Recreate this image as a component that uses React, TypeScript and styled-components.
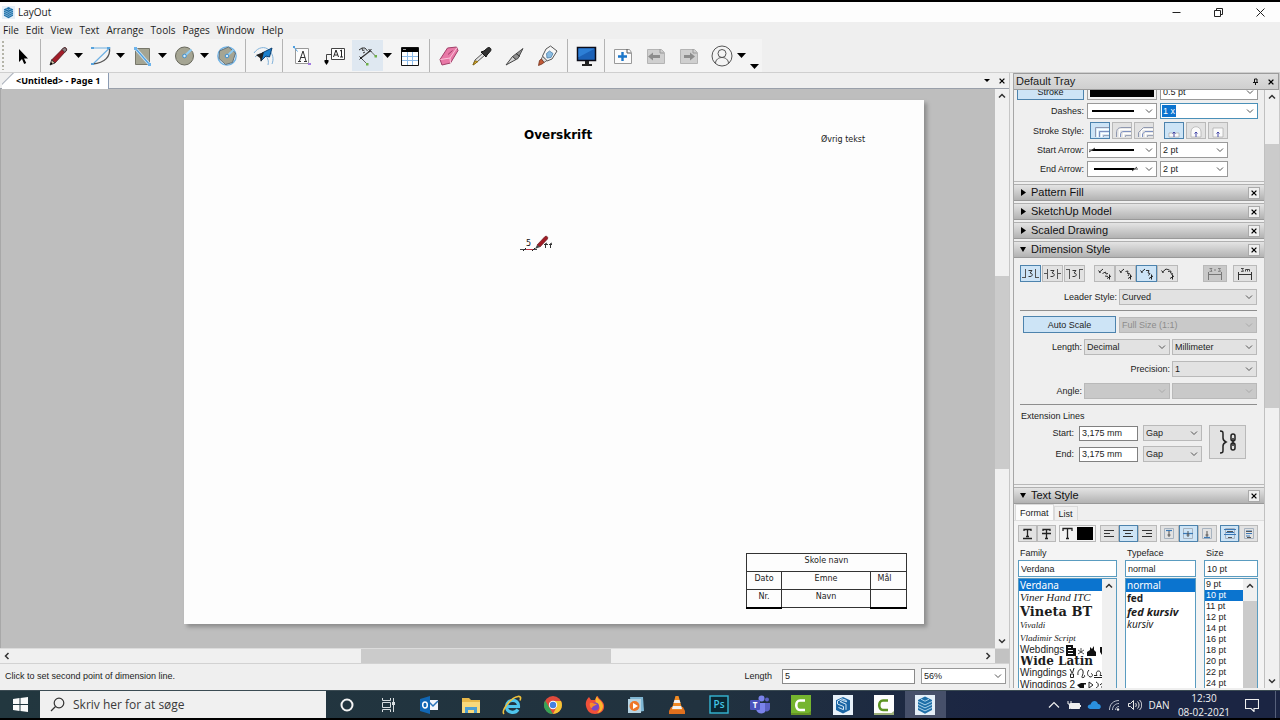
import React from 'react';
import styled, { createGlobalStyle, css } from 'styled-components';

const ARIAL = '"Liberation Sans", Arial, sans-serif';
const UI = '"Open Sans", "Noto Sans", sans-serif';
const SANS = '"Noto Sans", Verdana, sans-serif';
const DOC = '"DejaVu Sans", Verdana, sans-serif';

const Global = createGlobalStyle`
  *, *::before, *::after { box-sizing: border-box; }
  body { margin: 0; background: #000; font-family: ${ARIAL}; color: #1c1c1c; }
  button, input, select { font: inherit; color: inherit; margin: 0; padding: 0; border-radius: 0; }
  svg { display: block; flex: none; }
`;

const App_ = styled.div`
  display: flex;
  flex-direction: column;
  height: 100vh;
  overflow: hidden;
  background: #efefef;
  border-top: 2px solid #000;
  border-bottom: 2px solid #000;
  font-size: 9px;
`;

/* ---------- window chrome ---------- */
const TitleBar = styled.header`
  display: flex;
  align-items: center;
  flex: none;
  height: 20px;
  padding-left: 2px;
  gap: 3px;
  background: #fdfdfd;
  font: 10px/20px ${UI};
`;
const AppTitle = styled.h1`
  flex: 1;
  margin: 0;
  font: inherit;
`;
const WinButton = styled.button`
  display: grid;
  place-items: center;
  width: 39px;
  height: 20px;
  border: 0;
  background: none;
`;
const MenuBar = styled.nav`
  display: flex;
  flex: none;
  height: 17px;
  padding-left: 3px;
  gap: 7px;
  font: 10px/17px ${UI};
`;
const MenuButton = styled.button`
  border: 0;
  background: none;
`;

/* ---------- toolbar ---------- */
const ToolBar = styled.div`
  flex: none;
  height: 34px;
  border-bottom: 1px solid #cfcfcf;
`;
const ToolStrip = styled.div`
  display: flex;
  align-items: stretch;
  width: 762px;
  height: 33px;
  background: #f4f4f4;
`;
const Grip = styled.span`
  width: 8px;
  margin: 2px 0;
  background: repeating-linear-gradient(#b4b4a8 0 2px, transparent 2px 4px) 2px 0 / 2px 100% no-repeat;
`;
const ToolGroup = styled.div<{ $pad?: number; $last?: boolean }>`
  display: flex;
  align-items: center;
  gap: 2px;
  padding: 0 ${p => (p.$pad ?? 0) + 3}px 0 ${p => (p.$pad ?? 0) + 2}px;
  border-right: ${p => (p.$last ? 0 : 1)}px solid #b4b4b4;
  &:nth-child(2) { padding-left: 1px; }
`;
const Split = styled.div`
  display: flex;
  align-items: center;
`;
const ToolButton = styled.button<{ $on?: boolean }>`
  display: grid;
  place-items: center;
  width: 31px;
  height: 31px;
  border: 0;
  background: ${p => (p.$on ? '#dfe8f1' : 'none')};
`;
const DropButton = styled.button<{ $low?: boolean }>`
  display: grid;
  place-items: center;
  width: 9px;
  height: 31px;
  border: 0;
  background: none;
  align-self: ${p => (p.$low ? 'flex-end' : 'center')};
  ${p => p.$low && css`height: 12px; margin-left: 2px;`}
`;

/* ---------- main split ---------- */
const Main = styled.div`
  flex: 1;
  min-height: 0;
  display: grid;
  grid-template-columns: minmax(0, 1fr) 267px;
  column-gap: 3px;
  padding-bottom: 2px;
`;
const Editor = styled.main`
  display: flex;
  flex-direction: column;
  min-height: 0;
  border-right: 1px solid #c6c6c6;
`;
const TabBar = styled.div`
  display: flex;
  flex: none;
  justify-content: space-between;
  height: 16px;
  padding-left: 2px;
  border-bottom: 1px solid #9aa0aa;
`;
const DocTab = styled.button`
  height: 16px;
  padding: 0 8px 0 14px;
  border: 0;
  border-right: 1px solid #8b9bb3;
  background: linear-gradient(135deg, #efefef 7px, #a4acb8 8px, #fff 9px);
  font: bold 9px/16px "Noto Sans", "DejaVu Sans", sans-serif;
  color: #000;
`;
const TabTools = styled.div`
  display: flex;
  align-items: center;
`;
const TinyButton = styled.button`
  display: grid;
  place-items: center;
  width: 15px;
  height: 15px;
  border: 0;
  background: none;
`;
const CanvasArea = styled.div`
  flex: 1;
  min-height: 0;
  display: grid;
  grid-template-columns: minmax(0, 1fr) 14px;
`;
const Canvas = styled.div`
  position: relative;
  overflow: hidden;
  background: #bebebe;
  border-left: 1px solid #a8a8a8;
`;
const Paper = styled.section`
  position: absolute;
  left: 183px;
  top: 11px;
  width: 740px;
  height: 524px;
  background: #fdfdfd;
  box-shadow: 3px 3px 4px #8d8d8d;
  color: #222;
  font: 8px/10px ${DOC};
`;
const Heading = styled.h2`
  position: absolute;
  left: 340px;
  top: 27px;
  margin: 0;
  font: bold 12px/16px ${DOC};
  color: #000;
`;
const Note = styled.p`
  position: absolute;
  left: 637px;
  top: 35px;
  margin: 0;
`;
const Drawing = styled.svg`
  position: absolute;
  left: 334px;
  top: 132px;
`;
const TitleBlock = styled.table`
  position: absolute;
  left: 562px;
  top: 453px;
  width: 160px;
  border-collapse: collapse;
  table-layout: fixed;
  td {
    height: 18px;
    padding: 0 0 3px;
    border: 1px solid #333;
    text-align: center;
  }
  tr:last-child td:not(:nth-child(2)) { border-bottom: 2px solid #000; }
  tr:nth-child(2) td:last-child { padding-right: 8px; }
`;

/* ---------- scroll bars ---------- */
const ScrollBar = styled.div<{ $h?: boolean }>`
  display: flex;
  flex-direction: ${p => (p.$h ? 'row' : 'column')};
  flex: 1;
  min-width: 0;
  background: #f0f0f0;
`;
const ScrollArrow = styled.button`
  display: grid;
  place-items: center;
  width: 14px;
  height: 14px;
  flex: none;
  border: 0;
  background: none;
`;
const Track = styled.span<{ $w: number }>`
  flex: ${p => p.$w} 1 0;
`;
const Thumb = styled(Track)`
  background: #cbcbcb;
`;
const BottomScroll = styled.div`
  display: flex;
  flex: none;
  height: 16px;
  border-top: 1px solid #dcdcdc;
  border-bottom: 1px solid #d2d2d2;
`;
const Corner = styled.span`
  width: 14px;
  background: #c2c2c2;
`;
const StatusBar = styled.footer`
  display: flex;
  align-items: center;
  flex: none;
  height: 24px;
  padding: 0 3px 0 5px;
`;
const StatusText = styled.span`
  flex: 1;
`;
const StatusField = styled.input`
  width: 133px;
  height: 15px;
  margin: 0 6px 0 10px;
  padding: 0 2px;
  border: 1px solid #8a8a8a;
  background: #fff;
`;

/* ---------- tray ---------- */
const Tray = styled.aside`
  display: flex;
  flex-direction: column;
  min-height: 0;
  border-left: 1px solid #a6a6a6;
  border-right: 1px solid #c8c8c8;
`;
const TrayTitle = styled.div`
  display: flex;
  align-items: center;
  flex: none;
  height: 17px;
  padding-left: 2px;
  border: 1px solid #9c9c9c;
  border-left: 0;
  background: linear-gradient(#dedede, #cfcfcf);
  h2 { flex: 1; margin: 0; font: 11px/15px ${ARIAL}; }
`;
const TrayBody = styled.div`
  flex: 1;
  min-height: 0;
  display: grid;
  grid-template-columns: minmax(0, 1fr) 14px;
`;
const TrayScroll = styled.div`
  overflow: hidden;
  border-right: 1px solid #c0c0c0;
`;
const Scrolled = styled.div`
  display: flex;
  flex-direction: column;
  gap: 2px;
  margin-top: -10px;
`;
const SectionHead = styled.div`
  display: flex;
  align-items: center;
  height: 17px;
  padding: 0 4px 0 6px;
  gap: 5px;
  border-top: 1px solid #b0b0b0;
  border-bottom: 1px solid #999;
  background: linear-gradient(#e4e4e4, #b2b2b2);
  h3 { flex: 1; margin: 0; font: 11px/15px ${ARIAL}; color: #111; }
`;
const CloseBox = styled.button`
  display: grid;
  place-items: center;
  width: 12px;
  height: 12px;
  border: 1px solid #aaa;
  background: #efefef;
`;
const StrokePanel = styled.div`
  display: grid;
  grid-template-columns: 67px 70px 98px;
  gap: 3px;
  align-items: center;
  padding: 3px 0 4px 3px;
  border-bottom: 1px solid #b8b8b8;
`;
const RowLabel = styled.label`
  text-align: right;
  white-space: nowrap;
`;
const Toggle = styled.button<{ $on?: boolean; $w?: number }>`
  display: grid;
  place-items: center;
  width: ${p => (p.$w ? p.$w + 'px' : '100%')};
  height: 17px;
  border: 1px solid ${p => (p.$on ? '#4d83ad' : '#b9b9b9')};
  background: ${p => (p.$on ? '#cde4f6' : '#e2e2e2')};
  &:disabled { background: #c9c9c9; }
`;
const Swatch = styled.button`
  height: 17px;
  border: 1px solid #a0a0a0;
  background: #000;
  box-shadow: inset 0 0 0 2px #f2f2f2;
`;
const SelectBox = styled.span<{ $w?: number; $white?: boolean; $blue?: boolean; $off?: boolean }>`
  display: grid;
  align-items: center;
  width: ${p => (p.$w ? p.$w + 'px' : 'auto')};
  height: 16px;
  flex: none;
  border: 1px solid ${p => (p.$blue ? '#4a90b8' : p.$white ? '#999' : '#b9b9b9')};
  background: ${p => (p.$off ? '#c9c9c9' : p.$white ? '#fff' : '#e2e2e2')};
  > * { grid-area: 1 / 1; }
  > svg { pointer-events: none; }
  > svg:last-child { justify-self: end; margin-right: 3px; }
  select {
    width: 100%;
    height: 14px;
    padding-left: 2px;
    border: 0;
    appearance: none;
    background: none;
    color: #1c1c1c;
    opacity: 1;
  }
  select:disabled { color: #8c8c8c; }
`;
const Picked = styled.span`
  justify-self: start;
  margin-left: 1px;
  padding: 0 1px;
  line-height: 12px;
  background: #0b74cf;
  color: #fff;
  pointer-events: none;
`;
const ButtonRun = styled.div<{ $gap?: number; $pad?: number }>`
  display: flex;
  gap: ${p => p.$gap ?? 2}px;
  padding-left: ${p => p.$pad ?? 0}px;
`;
const DimPanel = styled.div`
  display: flex;
  flex-direction: column;
  gap: 6px;
  height: 227px;
  margin-top: -2px;
  padding: 7px 7px 0 6px;
  border-bottom: 1px solid #b8b8b8;
`;
const Row = styled.div<{ $gap?: number }>`
  display: flex;
  justify-content: flex-end;
  align-items: center;
  gap: ${p => p.$gap ?? 2}px;
`;
const DimButtons = styled(Row)`
  justify-content: space-between;
  padding-bottom: 1px;
`;
const Rule = styled.hr`
  width: 100%;
  height: 1px;
  margin: -1px 0;
  border: 0;
  background: #8e8e8e;
`;
const Ext = styled.fieldset`
  min-width: 0;
  margin: 0;
  padding: 0 0 0 1px;
  border: 0;
  legend { padding: 0; line-height: 12px; }
`;
const ExtBody = styled.div`
  display: flex;
  align-items: flex-start;
  gap: 7px;
  padding-top: 3px;
`;
const ExtGrid = styled.div`
  display: grid;
  grid-template-columns: 53px 59px 59px;
  gap: 5px;
  align-items: center;
`;
const TextField = styled.input<{ $blue?: boolean }>`
  width: 100%;
  height: ${p => (p.$blue ? 17 : 15)}px;
  padding: 0 2px;
  border: 1px solid ${p => (p.$blue ? '#5a9cc0' : '#808080')};
  background: #fff;
`;
const LinkButton = styled.button`
  display: grid;
  place-items: center;
  width: 37px;
  height: 34px;
  border: 1px solid #b9b9b9;
  background: #e2e2e2;
`;
const TextTabs = styled.div`
  display: flex;
  align-items: flex-end;
  height: 16px;
  margin-top: -2px;
  padding-left: 1px;
`;
const TextTab = styled.button<{ $on?: boolean }>`
  height: ${p => (p.$on ? 16 : 14)}px;
  padding: 0 4px;
  border: 1px solid #dadada;
  border-bottom: 0;
  background: ${p => (p.$on ? '#fbfbfb' : '#f0f0f0')};
`;
const TextPanel = styled.div`
  margin-top: -2px;
  padding: 4px 6px 0 4px;
  border-top: 1px solid #dedede;
  background: #f4f4f4;
`;
const FormatBar = styled.div`
  display: flex;
  justify-content: space-between;
`;
const ColorToggle = styled(Toggle)`
  display: flex;
  align-items: center;
  justify-content: center;
  gap: 4px;
  background: #f4f4f4;
`;
const Ink = styled.span`
  width: 16px;
  height: 13px;
  background: #000;
`;
const FontGrid = styled.div`
  display: grid;
  grid-template-columns: 99px 71px 54px;
  column-gap: 8px;
  padding-top: 4px;
`;
const FontColumn = styled.div`
  display: flex;
  flex-direction: column;
  label { line-height: 14px; padding-left: 2px; }
`;
const ListFrame = styled.div<{ $bar?: boolean }>`
  display: grid;
  grid-template-columns: minmax(0, 1fr) ${p => (p.$bar ? '14px' : '')};
  height: 120px;
  margin-top: 1px;
  border: 1px solid #5a9cc0;
  background: #fff;
`;
const List = styled.ul`
  margin: 0;
  padding: 0;
  overflow: hidden;
  list-style: none;
`;
const Item = styled.li<{ $on?: boolean; $h: number; $font?: string }>`
  display: flex;
  align-items: center;
  gap: 1px;
  height: ${p => p.$h}px;
  padding-left: 1px;
  overflow: hidden;
  white-space: nowrap;
  font: ${p => p.$font ?? `9px ${ARIAL}`};
  line-height: ${p => p.$h}px;
  background: ${p => (p.$on ? '#0b74cf' : 'none')};
  color: ${p => (p.$on ? '#fff' : '#1c1c1c')};
`;

/* ---------- task bar ---------- */
const TaskBar = styled.div`
  display: flex;
  flex: none;
  height: 28px;
  border-top: 1px solid #3b4b53;
  background: linear-gradient(90deg, #22373f, #21323f 55%, #1b2543 78%);
  color: #f2f2f2;
  font-family: ${UI};
`;
const TaskButton = styled.button<{ $on?: boolean }>`
  display: grid;
  place-items: center;
  flex: 1;
  min-width: 0;
  border: 0;
  background: ${p => (p.$on ? '#46506a' : 'none')};
`;
const StartButton = styled(TaskButton)`
  flex: none;
  width: 40px;
`;
const Search = styled.label`
  display: flex;
  align-items: center;
  width: 286px;
  padding-left: 10px;
  gap: 8px;
  background: #f0f0f0;
  color: #3a3a3a;
  input {
    flex: 1;
    min-width: 0;
    border: 0;
    background: none;
    font: 12px ${UI};
    outline: 0;
  }
  input::placeholder { color: #3a3a3a; opacity: 1; }
`;
const Pinned = styled.div`
  display: flex;
  width: 620px;
`;
const Notify = styled.div`
  display: flex;
  align-items: center;
  margin-left: auto;
  padding-right: 2px;
  font-size: 10px;
`;
const NotifyButton = styled.button<{ $w?: number }>`
  display: grid;
  place-items: center;
  width: ${p => p.$w ?? 20}px;
  height: 27px;
  border: 0;
  background: none;
`;
const Clock = styled.time`
  width: 60px;
  text-align: center;
  line-height: 14px;
`;
const ShowDesktop = styled.button`
  width: 3px;
  height: 27px;
  margin-left: 5px;
  border: 0;
  border-left: 1px solid #56607a;
  background: none;
`;

/* ---------- drawings ---------- */
const Svg = ({ s = 22, h, children }: { s?: number; h?: number; children: React.ReactNode }) => (
  <svg width={s} height={h ?? s} viewBox={`0 0 ${s} ${h ?? s}`} fill="none" aria-hidden="true">{children}</svg>
);
const Down = ({ small }: { small?: boolean }) => (
  <svg width={small ? 6 : 9} height={small ? 3 : 5} viewBox="0 0 8 4" preserveAspectRatio="none" aria-hidden="true"><path d="M0 0h8L4 4z" fill="#000" /></svg>
);
const Chevron = ({ dir = 'down', c = '#444' }: { dir?: string; c?: string }) => {
  const d: Record<string, string> = { down: 'M1 2.5L4 5.5 7 2.5', up: 'M1 5.5L4 2.5 7 5.5', left: 'M5.5 1L2.5 4 5.5 7', right: 'M2.5 1L5.5 4 2.5 7' };
  return <Svg s={8}><path d={d[dir]} stroke={c} strokeWidth={dir === 'down' && c !== '#333' ? 1 : 1.5} /></Svg>;
};
const Cross = ({ s = 6 }: { s?: number }) => (
  <svg width={s} height={s} viewBox="0 0 6 6" aria-hidden="true"><path d="M.6.6l4.8 4.8M5.4.6L.6 5.4" stroke="#000" strokeWidth="1.3" /></svg>
);
const LayerLogo = ({ s = 12 }: { s?: number }) => (
  <svg width={s} height={s} viewBox="0 0 20 20" fill="none" aria-hidden="true">
    <rect width="20" height="20" fill="#e4eff8" />
    <path d="M10 1.5l7 3.5v10l-7 3.8L3 15V5z" fill="#1f6fa8" />
    <path d="M3 6.5l7 3.4 7-3.4M3 9.5l7 3.4 7-3.4M3 12.5l7 3.4 7-3.4M6 4.2l4 2 4-2" stroke="#b9dcf2" strokeWidth=".9" />
  </svg>
);
const SketchLogo = () => (
  <Svg s={20}>
    <rect width="20" height="20" fill="#e8f1f9" />
    <path d="M10 2l7 3.2V15l-7 3.5L3 15V5.2z" fill="#1b66a5" />
    <path d="M13.5 5.5L9 3.8 4.5 6v3l6 2.5v3.2l-5-2.2M14 6.8L9.5 5.5 7 6.6l6 2.6v5.6" stroke="#d6eaf8" strokeWidth="1" />
  </Svg>
);

const toolIcons: Record<string, React.ReactNode> = {
  Select: <path d="M8 4v13l3-3 2.200 5 2-1-2.200-4.600h4z" fill="#000" />,
  Line: <><path d="M3.600 15L15.500 3c1.800-1.300 4 .800 2.800 2.600L7 18z" fill="#a31d29" stroke="#4a1015" strokeWidth=".800" /><path d="M14 4.600l2.800 2.800 1.500-1.600c1-2-1.300-3.900-2.800-2.800z" fill="#8c7f82" stroke="#3d2a2c" strokeWidth=".800" /><path d="M2 20l1.600-5L7 18z" fill="#d8c6a8" stroke="#222" strokeWidth=".800" /><path d="M2 20l1-3 1.600 1.700z" fill="#000" /></>,
  Arc: <><path d="M2.500 3h17L3 19" stroke="#6fb0e2" strokeWidth="1.200" /><path d="M19.500 3c1 8-4 15-17 16" stroke="#555" strokeWidth="1.300" /><path d="M1 2h3v2H1zM17 2h3v2h-3zM1 18h3v2H1z" fill="#58a3dc" /></>,
  Rectangle: <><path d="M3.500 3.500h14v16h-14z" fill="#a5a593" stroke="#77776a" /><path d="M3 3l15 17" stroke="#cfe6f8" strokeWidth="3" /><path d="M3 3l15 17" stroke="#4d9fe0" strokeWidth="1.200" /><path d="M2 2h3v3H2zM16 18h3v3h-3z" fill="#6db4ec" /></>,
  Circle: <><circle cx="10.500" cy="11" r="9" fill="#a5a593" stroke="#66665a" /><path d="M10.500 11L17.500 4.500" stroke="#8fcbf2" strokeWidth="2.200" /><circle cx="10.500" cy="11" r="1.800" fill="#d5ebfa" stroke="#3f8fcd" /></>,
  Polygon: <><circle cx="11" cy="11" r="9.200" stroke="#6db2e6" strokeWidth="1.300" /><path d="M3.500 6l9-4 7 6-3 9.500-7 2-6.500-6z" fill="#a5a593" stroke="#5c6f7c" /><path d="M11 11l6.500-6" stroke="#8fcbf2" strokeWidth="2" /><circle cx="11" cy="11" r="1.800" fill="#d5ebfa" stroke="#3f8fcd" /></>,
  Offset: <><path d="M1 8c4-6 11-7 15-3s5 9 3 14M2 12c4-4 9-4 11-1s3 5 2 9" stroke="#7fb1da" /><path d="M9 8l10-5-2.500 9-3.500-1-5 5 1-4z" fill="#1c80cc" stroke="#0d3f70" /><path d="M3 10l8-3-2 7-1 3-1-4z" fill="#222" /></>,
  Text: <><path d="M4.500 3.500h13v15h-13z" fill="#fdfdfd" stroke="#999" /><path d="M7 16.500h3M13 16.500h3M8.500 16L12 6l3 10M9.600 12.500h4.500" stroke="#333" /><path d="M2.500 1.500l4 5" stroke="#4d9fe0" /><path d="M2 1h2v2H2z" fill="#4d9fe0" /><path d="M17 18h3v2h-3z" fill="#a37be0" /></>,
  Label: <><path d="M7.500 3.500h13v11h-13z" fill="#fff" stroke="#444" /><path d="M9.500 12l2.500-7 2.500 7M10.500 10h3M16 6l1.500-1v7M16 12h3" stroke="#222" /><path d="M7 9.500H2.500V18" stroke="#444" /><path d="M.500 15h4v2l-2 3-2-3z" fill="#000" /></>,
  Dimension: <><path d="M4 13l9-7" stroke="#333" strokeWidth="1.200" /><path d="M4 13l6 6M13 5.500l5.500 5.500" stroke="#666" /><path d="M2.500 11.500l3 3M2.500 14.500l3-3M11.500 4l3 3M11.500 7l3-3" stroke="#222" /><path d="M2 5l3-2 .500 2.500 2-.500M6 8l2-1M8 3l2.500 3M5 3l3 0" stroke="#333" /><path d="M9 18h2.500v2.500H9zM17.500 10H20v2.500h-2.500z" fill="#6fb04a" /></>,
  Table: <><path d="M2.500 2.500h17v18h-17z" fill="#fff" stroke="#111" /><path d="M3 3h16v4H3z" fill="#000" /><path d="M3 11.500h16M3 15.500h16M8.500 7v13M13.500 7v13" stroke="#8dbbe8" /><path d="M4 4.500h3" stroke="#999" /></>,
  Eraser: <><path d="M2 14.500L9.500 3l9-1 1.500 3.500L12.500 18 4 20z" fill="#e878a6" stroke="#a03f68" /><path d="M2.500 14.500l9.500-1.500 7-10.500M12 13l.500 5" stroke="#fbc4da" /><path d="M10 9.500l4.500-4" stroke="#a03f68" /></>,
  Sample: <><path d="M2 20l2-5 8-7 2 2-8 7z" fill="#e2e2e2" stroke="#555" /><path d="M2 20l2-4 3 .500z" fill="#edc33b" stroke="#8d6b10" /><path d="M10 7l5 5 1-2 3.500-4c1.500-2-1-4.500-3-3L13 6z" fill="#333" stroke="#111" /></>,
  Split: <><path d="M2 20l6.500-8.500L12 14.500z" fill="#d5d5d5" stroke="#444" /><path d="M8.500 11.500L19 3.500l-5 10-2 1z" fill="#8f8f8f" stroke="#333" strokeWidth=".800" /><path d="M12 8.500l4 3" stroke="#333" /></>,
  Join: <><path d="M9 4l4.500-3L20 6l-5 8-5 2-4.500-5z" fill="#f6f6f6" stroke="#555" /><path d="M9.500 8.500L12.500 6l3.500 2.500-2 4-4 .500z" fill="#8bbce2" stroke="#4d81aa" strokeWidth=".800" /><path d="M5.500 11.500l4.500 4-3 2-3-3z" fill="#ddd" stroke="#555" strokeWidth=".800" /><path d="M1.500 20.500l1-5 2-1.500 2.500 3.500-2 1.500z" fill="#c25a36" stroke="#71301a" strokeWidth=".800" /></>,
  Presentation: <><path d="M2.500 2.500h18v13h-18z" fill="#1c62b8" stroke="#0c0c18" strokeWidth="1.500" /><path d="M4 12L19 4v-.500H3.500V12z" fill="#2d7fd6" /><path d="M10 16h4v3h3v2H7v-2h3z" fill="#222" /></>,
  Add: <><path d="M2.500 4.500h15l2 3v11h-17z" fill="#fbfbfb" stroke="#999" /><path d="M15 4v4h4" stroke="#555" /><path d="M10.500 7v9M6 11.500h9" stroke="#1b76c9" strokeWidth="2.400" /></>,
  Previous: <><path d="M2.500 4.500h14l3 3v11h-17z" fill="#cfcfcf" stroke="#b4b4b4" /><path d="M15 4v4h4" stroke="#999" /><path d="M3 11.500l5-4v2.500h7v3H8v2.500z" fill="#8c8c8c" /></>,
  Next: <><path d="M2.500 4.500h14l3 3v11h-17z" fill="#cfcfcf" stroke="#b4b4b4" /><path d="M15 4v4h4" stroke="#999" /><path d="M17 11.500l-5-4v2.500H6v3h6v2.500z" fill="#8c8c8c" /></>,
  Account: <><circle cx="11" cy="11" r="10" stroke="#555" /><circle cx="11" cy="8.500" r="4" stroke="#555" /><path d="M4.500 18.500c0-8 13-8 13 0" stroke="#555" /></>,
};
const Tool = ({ name, on, drop }: { name: string; on?: boolean; drop?: boolean }) => (
  <Split>
    <ToolButton $on={on} aria-label={name}><Svg>{toolIcons[name]}</Svg></ToolButton>
    {drop && <DropButton aria-label={`${name} options`}><Down /></DropButton>}
  </Split>
);

const Choice = ({ value, label, id, w, white, blue, off, art, children }: {
  value?: string; label: string; id?: string; w?: number; white?: boolean; blue?: boolean; off?: boolean; art?: React.ReactNode; children?: React.ReactNode;
}) => (
  <SelectBox $w={w} $white={white} $blue={blue} $off={off}>
    <select id={id} aria-label={label} disabled={off}><option>{value ?? ''}</option></select>
    {art}
    {children}
    <Chevron c={off ? '#aaa' : '#555'} />
  </SelectBox>
);
const LineArt = ({ kind }: { kind: string }) => (
  <Svg s={56} h={12}>
    <path d={kind === 'end' ? 'M6 6h40' : 'M4 6h42'} stroke="#000" strokeWidth="2" />
    {kind === 'start' && <path d="M1 8l6-4M1 6h4" stroke="#444" />}
    {kind === 'end' && <path d="M44 8l5-4M46 6h4" stroke="#444" />}
  </Svg>
);
const Section = ({ title, open }: { title: string; open?: boolean }) => (
  <SectionHead>
    <Svg s={6} h={7}><path d={open ? 'M0 1h6L3 6z' : 'M1 0l5 3.500L1 7z'} fill="#000" /></Svg>
    <h3>{title}</h3>
    <CloseBox aria-label={`Close ${title}`}><Cross /></CloseBox>
  </SectionHead>
);
const Corners = ({ kind }: { kind: number }) => {
  const outer = ['M4.500 14V4.500H18', 'M3.500 14V10c0-4 2-5.500 5.500-5.500h9', 'M3.500 14V9.500l5-5H18'][kind];
  const mid = ['M8.500 14V8.500H18', 'M7.500 14v-2c0-2.500 1-3.500 3.500-3.500h7', 'M7.500 14v-3l2.500-2.500h8'][kind];
  return <Svg s={18} h={15}><path d="M6.500 14V6.500H18M10.500 14v-3.500H18" stroke="#fff" strokeWidth="1.500" /><path d={outer} stroke="#8f98b0" /><path d={mid} stroke="#7d90c0" /><path d="M12.500 14v-1.500H18" stroke="#9aa3b8" /></Svg>;
};
const Caps = ({ kind }: { kind: number }) => {
  const d = ['M4 14v-4h10v4z', 'M4 14V9c0-7 10-7 10 0v5z', 'M4 14V5h10v9z'];
  return <Svg s={18} h={15}><path d={d[kind]} fill="#fafafa" stroke="#aaa" strokeWidth=".700" /><path d="M9 14V9M7.500 10.500L9 9l1.500 1.500" stroke="#4548a8" /></Svg>;
};
const DimPos = ({ kind }: { kind: number }) => (
  <Svg s={19} h={15}>
    <path d="M7.500 4.500h3.500L9 7c3 0 3 3.500 0 3.500H7.500" stroke="#333" />
    <path d={['M4.500 3v9M14.500 3v9M1 11.500h3M15 11.500h3', 'M4.500 3v10M14.500 3v10M1 7.500h3M15 7.500h3', 'M4.500 3v10M14.500 3v10M1 3.500h3M15 3.500h3'][kind]} stroke="#555" />
  </Svg>
);
const DimAlign = ({ kind }: { kind: number }) => (
  <Svg s={18} h={15}>
    <path d="M3 6.500L7 3M2.500 4.500l2 2.500M11 12.500l4-2.500M13.500 8.500v5" stroke="#222" />
    <path d={['M6.500 7.500l3-1.500.500 2 2-.500M9 10l3 .500', 'M8.500 5.500l2.500-.500-.500 2.500 2 0-1.500 2.500', 'M8 4.500h3l-1 2.500 2 .500-1.500 2', 'M7 3l3.500 1M9 5.500l3-.500-.500 2 2 .500-1 1.500'][kind]} stroke="#333" />
  </Svg>
);
const DimUnit = ({ long }: { long?: boolean }) => (
  <Svg s={20} h={15}>
    <path d="M3.500 6v8M16.500 6v8M3 8.500h14" stroke={long ? '#333' : '#777'} />
    <path d={long ? 'M6 2.500h2.500l-1 1.200 1 1.600H6M10.500 5.500V3.500h4v2M12.500 3.500v2' : 'M4.500 2.500H7l-1 1.200 1 1.600H4.500M9 4h2M13 2.500h2.500l-1 1.200 1 1.600H13'} stroke={long ? '#333' : '#777'} strokeWidth=".900" />
  </Svg>
);
const AlignIcon = ({ kind }: { kind: number }) => (
  <Svg s={16} h={13}><path d={['M3 3.500h10M3 6.500h6M3 9.500h10', 'M3 3.500h10M5 6.500h6M3 9.500h10', 'M3 3.500h10M7 6.500h6M3 9.500h10'][kind]} stroke="#333" strokeWidth="1.200" /></Svg>
);
const AnchorIcon = ({ kind }: { kind: number }) => (
  <Svg s={16} h={13}>
    <path d="M3.500 1.500h9v10h-9z" stroke="#a7b3c0" />
    <path d={['M5 3.500h6', 'M3 6.500h10', 'M5 10.500h6', 'M2 2.500h12M4 5.500h8M2 7.500h12', 'M5 4h6M5 6.500h6M5 9h4'][kind]} stroke="#3b78b5" strokeWidth="1.200" />
    {kind < 3 && <path d="M8 4v6M6.500 8h3" stroke="#555" />}
    {kind > 2 && <path d="M6 10.500h4M5 4.500h6" stroke="#555" />}
  </Svg>
);

const WebdingsArt = () => (
  <Svg s={42} h={12}>
    <path d="M1 1h7v3h3v8H1zM22 12V8l3-2V3l2 2 2-3v4l2 2v4zM35 3h7v6l-2 2h-3l-2-3z" fill="#111" />
    <path d="M3 3.500h3M3 6.500h5M3 9.500h5" stroke="#fff" />
    <path d="M13 10l6-4M13 6l6 4M16 4v5" stroke="#555" />
  </Svg>
);
const WingdingsArt = () => (
  <Svg s={40} h={12}>
    <path d="M2 2l2 4M6 1L4.500 6M2.500 7h3v3.500h-3z" stroke="#222" />
    <path d="M10 8c-1-5 4-8 5-4s-3 7 0 6.500c2 0 2-2 1-2.500" stroke="#222" />
    <path d="M21 3c-3 3-1 7 2 7 2-1 2-3 0-3.500" stroke="#222" />
    <path d="M26 10.500h9M26 8.500h3c-3-6 6-6 3 0h3M37 5.500h3" stroke="#222" />
  </Svg>
);
const Wingdings2Art = () => (
  <Svg s={34} h={12}>
    <path d="M1 6l4-2h5v1.500H8V9H4z" fill="#111" />
    <path d="M13 3v6l4-3zM20 3c3 1 3 5 0 6" stroke="#222" />
    <path d="M24 6c3-3 5-2 8-1M25 8h6" stroke="#222" />
  </Svg>
);

const families: { name: string; h: number; font?: string; extra?: React.ReactNode; on?: boolean }[] = [
  { name: 'Verdana', h: 12, font: `10px ${SANS}`, on: true },
  { name: 'Viner Hand ITC', h: 13, font: 'italic 11px "Liberation Serif", serif' },
  { name: 'Vineta BT', h: 15, font: 'bold 13px "DejaVu Serif", serif' },
  { name: 'Vivaldi', h: 13, font: 'italic 9px "Liberation Serif", serif' },
  { name: 'Vladimir Script', h: 12, font: 'italic 9px "Liberation Serif", serif' },
  { name: 'Webdings', h: 12, font: `10px ${ARIAL}`, extra: <WebdingsArt /> },
  { name: 'Wide Latin', h: 11, font: 'bold 12px "DejaVu Serif", serif' },
  { name: 'Wingdings', h: 12, font: `10px ${ARIAL}`, extra: <WingdingsArt /> },
  { name: 'Wingdings 2', h: 12, font: `10px ${ARIAL}`, extra: <Wingdings2Art /> },
];
const sizes = ['9 pt', '10 pt', '11 pt', '12 pt', '14 pt', '16 pt', '18 pt', '20 pt', '22 pt', '24 pt'];
const faces = [
  { name: 'normal', font: `10px ${SANS}`, on: true },
  { name: 'fed', font: `bold 10px ${SANS}` },
  { name: 'fed kursiv', font: `italic bold 11px ${SANS}` },
  { name: 'kursiv', font: `italic 10px ${SANS}` },
];

const camtasia = (bg: string, fg: string) => (
  <Svg s={20}><rect width="20" height="20" fill={bg} /><path d="M14 5.500H9c-5 0-5 9.500 0 9.500h5" stroke={fg} strokeWidth="2.600" /><path d="M20 16v4h-5zM0 18h20v2H0z" fill="#5e7d22" opacity=".6" /></Svg>
);
const pinned: { name: string; icon: React.ReactNode; on?: boolean }[] = [
  { name: 'Cortana', icon: <Svg s={14}><circle cx="7" cy="7" r="5.500" stroke="#f4f4f4" strokeWidth="2" /></Svg> },
  { name: 'Task view', icon: <Svg s={14}><path d="M1.500 0v2.500h8V0M1.500 4.500h8v5h-8zM1.500 14v-2.500h8V14M12.500 0v14" stroke="#d8dde0" /><path d="M11 4h3v3h-3z" fill="#d8dde0" /></Svg> },
  { name: 'Outlook', icon: <Svg s={20}><path d="M9 5h10v10H9z" fill="#f2f6fb" /><path d="M9 6l5 5 5-5" stroke="#2a74ba" strokeWidth="1.500" /><path d="M1 4l10-3v18L1 16z" fill="#1167b5" /><ellipse cx="6" cy="10" rx="2.300" ry="3" stroke="#fff" strokeWidth="1.500" /></Svg> },
  { name: 'Explorer', icon: <Svg s={20}><path d="M1 3h7l2 2h9v13H1z" fill="#e8b84a" /><path d="M1 7h18v11H1z" fill="#f8d97c" /><path d="M4 18v-6h12v6h-3v-3H7v3z" fill="#4d9fd2" /></Svg> },
  { name: 'Internet Explorer', icon: <Svg s={20}><path d="M5 11.500h11.500c.500-8-11.500-8.500-12 0C4.500 18 13 19 16 14.500" stroke="#4fc5ec" strokeWidth="3.200" /><path d="M2 19C-1 16 8 3 16 1.500c3-.500 3 1.500 2 4" stroke="#efc13c" strokeWidth="1.600" /></Svg> },
  { name: 'Chrome', icon: <Svg s={18}><circle cx="9" cy="9" r="9" fill="#e04a3c" /><path d="M1.200 4.500L5.500 12 9 18A9 9 0 011.200 4.500z" fill="#37a356" /><path d="M9 5h8a9 9 0 01-8 13l3.500-7z" fill="#f3c736" /><circle cx="9" cy="9" r="4.200" fill="#fff" /><circle cx="9" cy="9" r="3.200" fill="#4680e0" /></Svg> },
  { name: 'Firefox', icon: <Svg s={20}><path d="M1 11C0 6 3 3 4 2l2 3 4 0c1-3 2-4 3-4 0 3 5 4 6 9 1 6-4 9-9 9s-8-3-9-8z" fill="#f0503a" /><path d="M12 1c0 3 6 5 6 10 0 4-3 7-6 7 4-3 3-8 0-9-2-1-2-5 0-8z" fill="#fbb62d" /><circle cx="10" cy="11.500" r="4" fill="#7648c8" /><path d="M5 8c3-1 4 1 7 1-1 2-4 1-5 4-1 1-3-3-2-5z" fill="#f98b2c" /></Svg> },
  { name: 'Media player', icon: <Svg s={18}><path d="M3 1h13l1 14-12 2z" fill="#7fb6d3" /><path d="M1 3h13v14H1z" fill="#b5d3e2" /><circle cx="7.500" cy="10" r="5" fill="#ee7527" /><path d="M6 7l5 3-5 3z" fill="#fff" /></Svg> },
  { name: 'VLC', icon: <Svg s={20}><path d="M2 16l2-4h12l2 4v3H2z" fill="#e0701e" /><path d="M8.500 1h3l4 14h-11z" fill="#f08a24" /><path d="M7.500 5h5l1 3h-7zM5.800 11h8.400l.800 3H5z" fill="#f1f1f1" /></Svg> },
  { name: 'Photoshop', icon: <svg width="20" height="19" viewBox="0 0 20 19" aria-hidden="true"><rect x="1" y="1" width="18" height="17" fill="#0a2733" stroke="#35b7d4" strokeWidth="1.400" /><text x="10" y="13" textAnchor="middle" fontSize="10" fontFamily="Open Sans, sans-serif" fontWeight="600" fill="#43c6e6">Ps</text></svg> },
  { name: 'Teams', icon: <svg width="20" height="20" viewBox="0 0 20 20" aria-hidden="true"><circle cx="11.500" cy="3.500" r="3" fill="#7b83eb" /><circle cx="17" cy="4.500" r="2" fill="#5b61c4" /><path d="M6 8h10v6c0 6-9 6-10 0z" fill="#7b83eb" /><path d="M15 8h5v5c0 3-3 4-5 3z" fill="#5b61c4" /><rect y="5" width="10" height="10" rx="1" fill="#4b53bc" /><text x="5" y="13" textAnchor="middle" fontSize="8" fontFamily="Open Sans, sans-serif" fontWeight="700" fill="#fff">T</text></svg> },
  { name: 'Camtasia', icon: camtasia('#75b52f', '#fff') },
  { name: 'SketchUp', icon: <SketchLogo /> },
  { name: 'Camtasia recorder', icon: camtasia('#fdfdfd', '#5c9422') },
  { name: 'LayOut', icon: <LayerLogo s={20} />, on: true },
];

export default function App() {
  return (
    <App_>
      <Global />
      <TitleBar>
        <LayerLogo s={13} />
        <AppTitle>LayOut</AppTitle>
        <WinButton aria-label="Minimize"><Svg s={9}><path d="M.500 4.500h8" stroke="#222" /></Svg></WinButton>
        <WinButton aria-label="Restore"><Svg s={9}><path d="M.500 2.500h6v6h-6zM2.500 2V.500h6v6H7" stroke="#222" /></Svg></WinButton>
        <WinButton aria-label="Close"><Svg s={9}><path d="M.500.500l8 8M8.500.500l-8 8" stroke="#222" /></Svg></WinButton>
      </TitleBar>
      <MenuBar>
        {['File', 'Edit', 'View', 'Text', 'Arrange', 'Tools', 'Pages', 'Window', 'Help'].map(m => <MenuButton key={m}>{m}</MenuButton>)}
      </MenuBar>

      <ToolBar>
        <ToolStrip>
          <Grip />
          <ToolGroup><Tool name="Select" /></ToolGroup>
          <ToolGroup><Tool name="Line" drop /><Tool name="Arc" drop /><Tool name="Rectangle" drop /><Tool name="Circle" drop /><Tool name="Polygon" /></ToolGroup>
          <ToolGroup><Tool name="Offset" /></ToolGroup>
          <ToolGroup $pad={1}><Tool name="Text" /><Tool name="Label" /><Tool name="Dimension" on drop /><Tool name="Table" /></ToolGroup>
          <ToolGroup $pad={1}><Tool name="Eraser" /><Tool name="Sample" /><Tool name="Split" /><Tool name="Join" /></ToolGroup>
          <ToolGroup><Tool name="Presentation" /></ToolGroup>
          <ToolGroup $last><Tool name="Add" /><Tool name="Previous" /><Tool name="Next" /><Tool name="Account" drop /><DropButton $low aria-label="Toolbar options"><Down /></DropButton></ToolGroup>
        </ToolStrip>
      </ToolBar>

      <Main>
        <Editor>
          <TabBar>
            <DocTab>&lt;Untitled&gt; - Page 1</DocTab>
            <TabTools>
              <TinyButton aria-label="Page list"><Down small /></TinyButton>
              <TinyButton aria-label="Close document"><Cross /></TinyButton>
            </TabTools>
          </TabBar>
          <CanvasArea>
            <Canvas>
              <Paper>
                <Heading>Overskrift</Heading>
                <Note>Øvrig tekst</Note>
                <Drawing width="40" height="20" viewBox="0 0 40 20" fill="none">
                  <path d="M2 17.500h17" stroke="#444" /><path d="M8 17.500h7" stroke="#b83040" /><path d="M5 19l3-3M14 19l3-3" stroke="#222" />
                  <text x="10.500" y="14" textAnchor="middle" fontSize="8" fontFamily="DejaVu Sans, sans-serif" fill="#111">5</text>
                  <path d="M19 13l8-8.500c1.500-1 3.500.500 2.500 2.500L22 15z" fill="#a01c26" stroke="#5e1016" strokeWidth=".600" />
                  <path d="M17 17l2-4 3 2z" fill="#444" />
                  <path d="M27.500 16v-4M26 12.500h4M32.500 16v-4M31 12.500h3M27 12l2-1M32 12l2-1" stroke="#333" />
                </Drawing>
                <TitleBlock>
                  <colgroup><col width="35" /><col width="89" /><col width="36" /></colgroup>
                  <tbody>
                    <tr><td colSpan={3}>Skole navn</td></tr>
                    <tr><td>Dato</td><td>Emne</td><td>Mål</td></tr>
                    <tr><td>Nr.</td><td>Navn</td><td /></tr>
                  </tbody>
                </TitleBlock>
              </Paper>
            </Canvas>
            <ScrollBar>
              <ScrollArrow aria-label="Scroll up"><Chevron dir="up" c="#333" /></ScrollArrow>
              <Track $w={173} /><Thumb $w={194} /><Track $w={165} />
              <ScrollArrow aria-label="Scroll down"><Chevron c="#333" /></ScrollArrow>
            </ScrollBar>
          </CanvasArea>
          <BottomScroll>
            <ScrollBar $h>
              <ScrollArrow aria-label="Scroll left"><Chevron dir="left" c="#333" /></ScrollArrow>
              <Track $w={347} /><Thumb $w={249} /><Track $w={370} />
              <ScrollArrow aria-label="Scroll right"><Chevron dir="right" c="#333" /></ScrollArrow>
            </ScrollBar>
            <Corner />
          </BottomScroll>
          <StatusBar>
            <StatusText>Click to set second point of dimension line.</StatusText>
            <label htmlFor="length">Length</label>
            <StatusField id="length" defaultValue="5" />
            <Choice label="Zoom" value="56%" w={85} white />
          </StatusBar>
        </Editor>

        <Tray>
          <TrayTitle>
            <h2>Default Tray</h2>
            <TinyButton aria-label="Pin tray"><Svg s={7}><path d="M1 4.500h5M2.500 4V1h2.500v3M3.500 5v2" stroke="#111" /></Svg></TinyButton>
            <TinyButton aria-label="Close tray"><Cross /></TinyButton>
          </TrayTitle>
          <TrayBody>
            <TrayScroll>
              <Scrolled>
                <StrokePanel>
                  <Toggle $on>Stroke</Toggle>
                  <Swatch aria-label="Stroke colour" />
                  <Choice label="Stroke width" value="0.5 pt" white />

                  <RowLabel htmlFor="dashes">Dashes:</RowLabel>
                  <Choice id="dashes" label="Dashes" white art={<LineArt kind="line" />} />
                  <Choice label="Dash scale" white blue><Picked>1 x</Picked></Choice>

                  <RowLabel as="span">Stroke Style:</RowLabel>
                  <ButtonRun $pad={3}>{[0, 1, 2].map(k => <Toggle key={k} $w={20} $on={k === 0} aria-label={`Corner style ${k + 1}`}><Corners kind={k} /></Toggle>)}</ButtonRun>
                  <ButtonRun $pad={4}>{[0, 1, 2].map(k => <Toggle key={k} $w={20} $on={k === 0} aria-label={`Cap style ${k + 1}`}><Caps kind={k} /></Toggle>)}</ButtonRun>

                  <RowLabel htmlFor="start-arrow">Start Arrow:</RowLabel>
                  <Choice id="start-arrow" label="Start arrow" white art={<LineArt kind="start" />} />
                  <Choice label="Start arrow size" value="2 pt" w={68} white />

                  <RowLabel htmlFor="end-arrow">End Arrow:</RowLabel>
                  <Choice id="end-arrow" label="End arrow" white art={<LineArt kind="end" />} />
                  <Choice label="End arrow size" value="2 pt" w={68} white />
                </StrokePanel>
                <Section title="Pattern Fill" />
                <Section title="SketchUp Model" />
                <Section title="Scaled Drawing" />
                <Section title="Dimension Style" open />
                <DimPanel>
                  <DimButtons>
                    <ButtonRun $gap={1}>{[0, 1, 2].map(k => <Toggle key={k} $w={21} $on={k === 0} aria-label={`Text position ${k + 1}`}><DimPos kind={k} /></Toggle>)}</ButtonRun>
                    <ButtonRun $gap={0}>{[0, 1, 2, 3].map(k => <Toggle key={k} $w={21} $on={k === 2} aria-label={`Text alignment ${k + 1}`}><DimAlign kind={k} /></Toggle>)}</ButtonRun>
                    <ButtonRun $gap={6} $pad={16}>
                      <Toggle $w={24} disabled aria-label="Dual units"><DimUnit /></Toggle>
                      <Toggle $w={24} aria-label="Show units"><DimUnit long /></Toggle>
                    </ButtonRun>
                  </DimButtons>
                  <Row><label htmlFor="leader">Leader Style:</label><Choice id="leader" label="Leader style" value="Curved" w={138} /></Row>
                  <Rule />
                  <Row $gap={3}>
                    <Toggle $on $w={93}>Auto Scale</Toggle>
                    <Choice label="Scale" value="Full Size (1:1)" w={138} off />
                  </Row>
                  <Row><label htmlFor="len-format">Length:</label><Choice id="len-format" label="Length format" value="Decimal" w={86} /><Choice label="Length unit" value="Millimeter" w={85} /></Row>
                  <Row><label htmlFor="precision">Precision:</label><Choice id="precision" label="Precision" value="1" w={85} /></Row>
                  <Row><label htmlFor="angle">Angle:</label><Choice id="angle" label="Angle format" w={86} off /><Choice label="Angle precision" w={85} off /></Row>
                  <Rule />
                  <Ext>
                    <legend>Extension Lines</legend>
                    <ExtBody>
                      <ExtGrid>
                        <RowLabel htmlFor="ext-start">Start:</RowLabel><TextField id="ext-start" defaultValue="3,175 mm" /><Choice label="Start mode" value="Gap" w={59} />
                        <RowLabel htmlFor="ext-end">End:</RowLabel><TextField id="ext-end" defaultValue="3,175 mm" /><Choice label="End mode" value="Gap" w={59} />
                      </ExtGrid>
                      <LinkButton aria-label="Link extension lines">
                        <Svg s={22} h={26}>
                          <path d="M3 2c3 0 3 1 3 3v4c0 2 1 3 3 4-2 1-3 2-3 4v4c0 2 0 3-3 3" stroke="#222" strokeWidth="1.500" />
                          <rect x="14" y="5" width="4" height="7" rx="2" stroke="#222" strokeWidth="1.500" /><rect x="14" y="14" width="4" height="7" rx="2" stroke="#222" strokeWidth="1.500" /><path d="M16 9v8" stroke="#222" strokeWidth="1.500" />
                        </Svg>
                      </LinkButton>
                    </ExtBody>
                  </Ext>
                </DimPanel>
                <Section title="Text Style" open />
                <TextTabs><TextTab $on>Format</TextTab><TextTab>List</TextTab></TextTabs>
                <TextPanel>
                  <FormatBar>
                    <ButtonRun $gap={0}>
                      <Toggle $w={19} aria-label="Underline"><Svg s={13}><path d="M3 4V2.500h7V4M6.500 2.500v7M5 9.500h3M2 11.500h9" stroke="#222" strokeWidth="1.300" /></Svg></Toggle>
                      <Toggle $w={19} aria-label="Strikethrough"><Svg s={13}><path d="M3 4V2.500h7V4M6.500 2.500v9M5 11.500h3M2 6.500h9" stroke="#222" strokeWidth="1.300" /></Svg></Toggle>
                    </ButtonRun>
                    <ColorToggle $w={37} aria-label="Text colour"><Svg s={11} h={13}><path d="M1 4V1.500h9V4M5.500 1.500v10M4 11.500h3" stroke="#222" strokeWidth="1.300" /></Svg><Ink /></ColorToggle>
                    <ButtonRun $gap={0}>{[0, 1, 2].map(k => <Toggle key={k} $w={19} $on={k === 1} aria-label={`Align ${k + 1}`}><AlignIcon kind={k} /></Toggle>)}</ButtonRun>
                    <ButtonRun $gap={0}>{[0, 1, 2].map(k => <Toggle key={k} $w={19} $on={k === 1} aria-label={`Anchor ${k + 1}`}><AnchorIcon kind={k} /></Toggle>)}</ButtonRun>
                    <ButtonRun $gap={0}>{[3, 4].map(k => <Toggle key={k} $w={19} $on={k === 3} aria-label={`Bounds ${k - 2}`}><AnchorIcon kind={k} /></Toggle>)}</ButtonRun>
                  </FormatBar>
                  <FontGrid>
                    <FontColumn>
                      <label htmlFor="family">Family</label>
                      <TextField $blue id="family" defaultValue="Verdana" />
                      <ListFrame $bar>
                        <List role="listbox" aria-label="Families">
                          {families.map(f => <Item key={f.name} role="option" aria-selected={!!f.on} $on={f.on} $h={f.h} $font={f.font}>{f.name}{f.extra}</Item>)}
                        </List>
                        <ScrollBar><ScrollArrow aria-label="Scroll families up"><Chevron dir="up" c="#333" /></ScrollArrow></ScrollBar>
                      </ListFrame>
                    </FontColumn>
                    <FontColumn>
                      <label htmlFor="typeface">Typeface</label>
                      <TextField $blue id="typeface" defaultValue="normal" />
                      <ListFrame>
                        <List role="listbox" aria-label="Typefaces">
                          {faces.map(f => <Item key={f.name} role="option" aria-selected={!!f.on} $on={f.on} $h={13} $font={f.font}>{f.name}</Item>)}
                        </List>
                      </ListFrame>
                    </FontColumn>
                    <FontColumn>
                      <label htmlFor="size">Size</label>
                      <TextField $blue id="size" defaultValue="10 pt" />
                      <ListFrame $bar>
                        <List role="listbox" aria-label="Sizes">
                          {sizes.map(s => <Item key={s} role="option" aria-selected={s === '10 pt'} $on={s === '10 pt'} $h={11}>{s}</Item>)}
                        </List>
                        <ScrollBar><ScrollArrow aria-label="Scroll sizes up"><Chevron dir="up" c="#333" /></ScrollArrow><Track $w={8} /><Thumb $w={96} /></ScrollBar>
                      </ListFrame>
                    </FontColumn>
                  </FontGrid>
                </TextPanel>
              </Scrolled>
            </TrayScroll>
            <ScrollBar>
              <ScrollArrow aria-label="Scroll tray up"><Chevron dir="up" c="#333" /></ScrollArrow>
              <Track $w={40} /><Thumb $w={265} /><Track $w={266} />
              <ScrollArrow aria-label="Scroll tray down"><Chevron c="#333" /></ScrollArrow>
            </ScrollBar>
          </TrayBody>
        </Tray>
      </Main>

      <TaskBar>
        <StartButton aria-label="Start"><Svg s={15}><path d="M0 2l6.500-1v6H0zM7.500 1L15 0v7H7.500zM0 8h6.500v6L0 13zM7.500 8H15v7l-7.500-1z" fill="#fafafa" /></Svg></StartButton>
        <Search>
          <Svg s={15}><circle cx="9" cy="6" r="4.800" stroke="#333" strokeWidth="1.200" /><path d="M5.500 9.500L1 14" stroke="#333" strokeWidth="1.200" /></Svg>
          <input aria-label="Search" placeholder="Skriv her for at søge" />
        </Search>
        <Pinned>{pinned.map(p => <TaskButton key={p.name} $on={p.on} aria-label={p.name}>{p.icon}</TaskButton>)}</Pinned>
        <Notify>
          <NotifyButton aria-label="Hidden icons"><Svg s={12} h={8}><path d="M1 6.500l5-5 5 5" stroke="#eee" strokeWidth="1.200" /></Svg></NotifyButton>
          <NotifyButton aria-label="Battery"><Svg s={14} h={10}><path d="M3.500 3.500h9v5h-9z" fill="#eee" stroke="#eee" /><path d="M1 1v3h3V1M2.500 4v5M13.500 5v2" stroke="#eee" /></Svg></NotifyButton>
          <NotifyButton aria-label="OneDrive"><Svg s={14} h={10}><path d="M3 9C-1 8 1 4 3.500 4.500 5 0 10 0 11 4c3 0 4 4 1 5z" fill="#2a8fdd" /></Svg></NotifyButton>
          <NotifyButton aria-label="Network"><Svg s={12}><path d="M1.500 11c0-6 4-9.500 9.500-9.500M4.500 11c0-4 3-6.500 6.500-6.500M7.500 11c0-2 1.500-3.500 3.500-3.500" stroke="#b9bfcb" /><circle cx="10" cy="10.500" r="1.200" fill="#eee" /></Svg></NotifyButton>
          <NotifyButton aria-label="Volume"><Svg s={15} h={12}><path d="M1.500 4.500h2l3-3v9l-3-3h-2zM8.500 4c1 1 1 3 0 4M10.500 2.500c2 2 2 5 0 7M12.500 1c3 3 3 7 0 10" stroke="#e6e6e6" /></Svg></NotifyButton>
          <NotifyButton $w={30}>DAN</NotifyButton>
          <Clock>12:30<br />08-02-2021</Clock>
          <NotifyButton $w={36} aria-label="Notifications"><Svg s={14}><path d="M.500 1.500h13v9H9v3l-3-3H.500z" stroke="#eee" strokeWidth="1.100" /></Svg></NotifyButton>
          <ShowDesktop aria-label="Show desktop" />
        </Notify>
      </TaskBar>
    </App_>
  );
}
